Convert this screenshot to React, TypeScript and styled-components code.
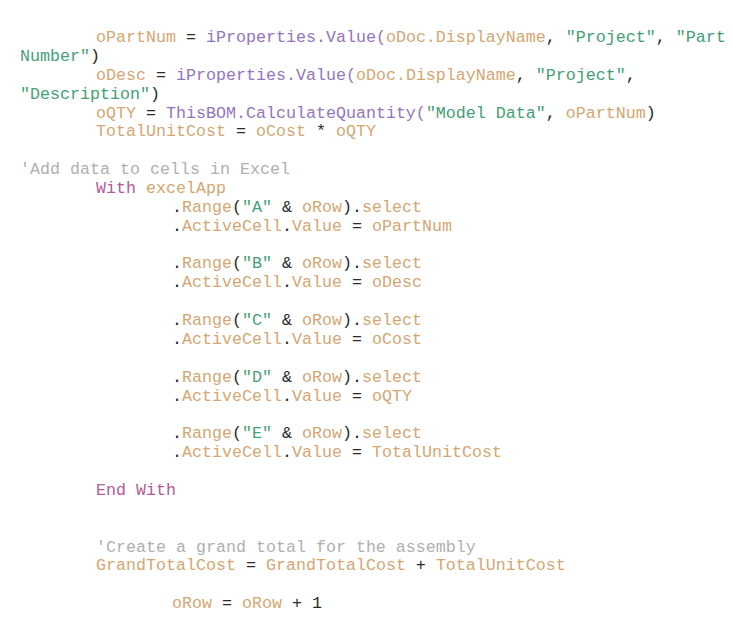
import React from "react";
import styled, { createGlobalStyle } from "styled-components";

const Global = createGlobalStyle`
  html, body { margin: 0; padding: 0; background: #ffffff; }
  body { width: 733px; }
`;

type Kind = "var" | "obj" | "str" | "kw" | "cm" | "op";

const colors: Record<Kind, string> = {
  var: "#d6a672",
  obj: "#9574c0",
  str: "#43a075",
  kw: "#b65a9c",
  cm: "#b0b0b0",
  op: "#2a2a2a",
};

const Listing = styled.pre`
  margin: 0;
  padding: 29px 0 20px 20px;
  width: 733px;
  box-sizing: border-box;
  font-family: "Liberation Mono", "Courier New", monospace;
  font-size: 16.67px;
  line-height: 18.87px;
  white-space: pre;
  color: #2a2a2a;
`;

const Line = styled.div<{ $indent: number }>`
  min-height: 18.87px;
  padding-left: ${(p) => p.$indent * 76}px;
`;

const Tok = styled.span<{ $k: Kind }>`
  color: ${(p) => colors[p.$k]};
`;

type T = [Kind, string];
type L = { indent: number; toks: T[] };

const v = (s: string): T => ["var", s];
const o = (s: string): T => ["obj", s];
const s = (x: string): T => ["str", x];
const k = (x: string): T => ["kw", x];
const c = (x: string): T => ["cm", x];
const p = (x: string): T => ["op", x];

const range = (letter: string): T[] => [
  p("."), v("Range"), p("("), s(`"${letter}"`), p(" & "), v("oRow"), p(")."), v("select"),
];
const active = (val: string): T[] => [
  p("."), v("ActiveCell"), p("."), v("Value"), p(" = "), v(val),
];

const lines: L[] = [
  {
    indent: 1,
    toks: [
      v("oPartNum"), p(" = "), o("iProperties.Value("), v("oDoc.DisplayName"), p(", "),
      s('"Project"'), p(", "), s('"Part'),
    ],
  },
  { indent: 0, toks: [s('Number"'), p(")")] },
  {
    indent: 1,
    toks: [
      v("oDesc"), p(" = "), o("iProperties.Value("), v("oDoc.DisplayName"), p(", "),
      s('"Project"'), p(","),
    ],
  },
  { indent: 0, toks: [s('"Description"'), p(")")] },
  {
    indent: 1,
    toks: [v("oQTY"), p(" = "), o("ThisBOM.CalculateQuantity("), s('"Model Data"'), p(", "), v("oPartNum"), p(")")],
  },
  { indent: 1, toks: [v("TotalUnitCost"), p(" = "), v("oCost"), p(" * "), v("oQTY")] },
  { indent: 0, toks: [] },
  { indent: 0, toks: [c("'Add data to cells in Excel")] },
  { indent: 1, toks: [k("With"), p(" "), v("excelApp")] },
  { indent: 2, toks: range("A") },
  { indent: 2, toks: active("oPartNum") },
  { indent: 0, toks: [] },
  { indent: 2, toks: range("B") },
  { indent: 2, toks: active("oDesc") },
  { indent: 0, toks: [] },
  { indent: 2, toks: range("C") },
  { indent: 2, toks: active("oCost") },
  { indent: 0, toks: [] },
  { indent: 2, toks: range("D") },
  { indent: 2, toks: active("oQTY") },
  { indent: 0, toks: [] },
  { indent: 2, toks: range("E") },
  { indent: 2, toks: active("TotalUnitCost") },
  { indent: 0, toks: [] },
  { indent: 1, toks: [k("End With")] },
  { indent: 0, toks: [] },
  { indent: 0, toks: [] },
  { indent: 1, toks: [c("'Create a grand total for the assembly")] },
  {
    indent: 1,
    toks: [v("GrandTotalCost"), p(" = "), v("GrandTotalCost"), p(" + "), v("TotalUnitCost")],
  },
  { indent: 0, toks: [] },
  { indent: 2, toks: [v("oRow"), p(" = "), v("oRow"), p(" + 1")] },
];

export default function App() {
  return (
    <>
      <Global />
      <Listing>
        {lines.map((ln, i) => (
          <Line key={i} $indent={ln.indent}>
            {ln.toks.map(([kind, text], j) => (
              <Tok key={j} $k={kind}>
                {text}
              </Tok>
            ))}
          </Line>
        ))}
      </Listing>
    </>
  );
}
